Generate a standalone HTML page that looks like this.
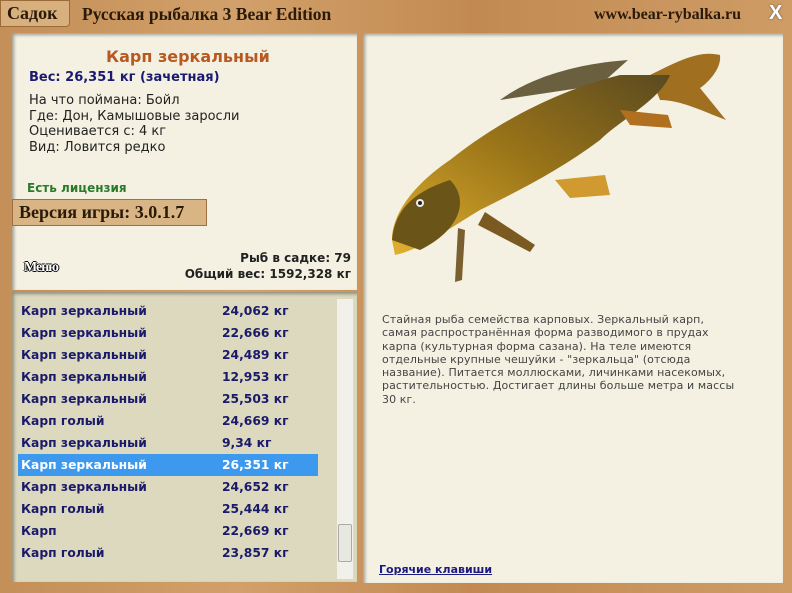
<!DOCTYPE html>
<html><head><meta charset="utf-8"><style>
*{margin:0;padding:0;box-sizing:border-box}
body{width:792px;height:593px;overflow:hidden;position:relative;background:linear-gradient(90deg,#c48f58,#d2a06a 30%,#c28a52 60%,#cf9c66);font-family:Verdana,"DejaVu Sans","Liberation Sans",sans-serif}
.abs{position:absolute}
.serif{font-family:"Liberation Serif","DejaVu Serif",serif;color:#2a1a0a;font-weight:bold}
.panel{position:absolute;background:#f4f1e3;box-shadow:inset 2px 2px 3px rgba(0,0,0,.35)}
.list div{position:absolute;left:0;width:300px;height:22px;font-weight:bold;font-size:12.3px;color:#1a1a6a;line-height:22px}
.list span{position:absolute;left:204px}
.sel{background:#3c99ee;color:#fff!important}
</style></head><body>
<div class="abs serif" style="left:0;top:0;width:70px;height:27px;background:#d8b07e;border:1px solid #9a6a38;border-radius:0 0 4px 0;font-size:18px;padding:2px 6px">Садок</div>
<div class="abs serif" style="left:82px;top:4px;font-size:17.5px;">Русская рыбалка 3 Bear Edition</div>
<div class="abs serif" style="left:594px;top:6px;font-size:16px;">www.bear-rybalka.ru</div>
<div class="abs" style="left:769px;top:2px;font:bold 20px 'Liberation Sans',sans-serif;color:#fff;text-shadow:0 0 2px #555">X</div>

<div class="panel" style="left:12px;top:33px;width:345px;height:257px"></div>
<div class="abs" style="left:106px;top:47px;font-size:16px;font-weight:bold;color:#b85a20">Карп зеркальный</div>
<div class="abs" style="left:29px;top:70px;font-size:13px;font-weight:bold;color:#1a1a70">Вес: 26,351 кг (зачетная)</div>
<div class="abs" style="left:29px;top:93px;font-size:13px;line-height:15.6px;color:#222">На что поймана: Бойл<br>Где: Дон, Камышовые заросли<br>Оценивается с: 4 кг<br>Вид: Ловится редко</div>
<div class="abs" style="left:27px;top:181px;font-size:12px;font-weight:bold;color:#2a7a2a">Есть лицензия</div>
<div class="abs serif" style="left:12px;top:199px;width:195px;height:27px;background:#d9b585;border:1px solid #a07040;font-size:18px;padding:2px 6px">Версия игры: 3.0.1.7</div>
<div class="abs" style="left:24px;top:260px;font:bold 14px 'Liberation Serif',serif;color:#fff;text-shadow:1px 0 #000,-1px 0 #000,0 1px #000,0 -1px #000;letter-spacing:-1px">Меню</div>
<div class="abs" style="right:441px;top:250px;font-size:12px;font-weight:bold;color:#222;text-align:right;line-height:16px">Рыб в садке: 79<br>Общий вес: 1592,328 кг</div>

<div class="panel" style="left:12px;top:292px;width:345px;height:290px;background:#dcd9be"></div>
<div class="abs" style="left:337px;top:299px;width:16px;height:280px;background:#f1f0ea"></div>
<div class="abs" style="left:338px;top:524px;width:14px;height:38px;background:#e8e8e2;border:1px solid #aaa;border-radius:2px"></div>
<div class="list abs" style="left:18px;top:300px">
<div style="top:0;padding-left:3px">Карп зеркальный<span>24,062 кг</span></div>
<div style="top:22px;padding-left:3px">Карп зеркальный<span>22,666 кг</span></div>
<div style="top:44px;padding-left:3px">Карп зеркальный<span>24,489 кг</span></div>
<div style="top:66px;padding-left:3px">Карп зеркальный<span>12,953 кг</span></div>
<div style="top:88px;padding-left:3px">Карп зеркальный<span>25,503 кг</span></div>
<div style="top:110px;padding-left:3px">Карп голый<span>24,669 кг</span></div>
<div style="top:132px;padding-left:3px">Карп зеркальный<span>9,34 кг</span></div>
<div class="sel" style="top:154px;padding-left:3px">Карп зеркальный<span>26,351 кг</span></div>
<div style="top:176px;padding-left:3px">Карп зеркальный<span>24,652 кг</span></div>
<div style="top:198px;padding-left:3px">Карп голый<span>25,444 кг</span></div>
<div style="top:220px;padding-left:3px">Карп<span>22,669 кг</span></div>
<div style="top:242px;padding-left:3px">Карп голый<span>23,857 кг</span></div>
</div>

<div class="panel" style="left:363px;top:33px;width:420px;height:550px"></div>
<svg class="abs" style="left:363px;top:33px" width="420" height="260" viewBox="363 33 420 260">
<defs><linearGradient id="g" x1="0" y1="1" x2="1" y2="0"><stop offset="0" stop-color="#e0b030"/><stop offset=".5" stop-color="#9a7418"/><stop offset="1" stop-color="#5a4a20"/></linearGradient></defs>
<path d="M500 100 C520 85 560 65 628 60 L600 85Z" fill="#6a6040"/>
<path d="M650 75 C680 60 700 50 720 55 C722 70 705 85 700 88 L726 120 C700 110 680 100 660 100Z" fill="#a07020"/>
<path d="M392 240 C392 210 420 180 450 160 C500 120 560 90 620 75 L670 75 C660 100 620 120 600 140 C560 170 520 190 480 210 C450 228 420 250 395 255Z" fill="url(#g)"/>
<path d="M392 240 C395 205 420 190 450 180 C470 200 460 230 420 250 Z" fill="#6a5418"/>
<path d="M555 180 L605 175 L610 195 L570 198Z" fill="#d09a30"/>
<path d="M620 110 L668 115 L672 128 L630 125Z" fill="#b07020"/>
<path d="M485 212 L535 245 L530 252 L478 225Z" fill="#7a5a20"/>
<path d="M465 230 L462 280 L455 282 L458 228Z" fill="#7a6030"/>
<circle cx="420" cy="203" r="4" fill="#eee"/><circle cx="420" cy="203" r="2" fill="#222"/>
</svg>
<div class="abs" style="left:382px;top:313px;white-space:nowrap;font-size:11px;line-height:13.3px;color:#444;letter-spacing:.1px">Стайная рыба семейства карповых. Зеркальный карп,<br>самая распространённая форма разводимого в прудах<br>карпа (культурная форма сазана). На теле имеются<br>отдельные крупные чешуйки - "зеркальца" (отсюда<br>название). Питается моллюсками, личинками насекомых,<br>растительностью. Достигает длины больше метра и массы<br>30 кг.</div>
<div class="abs" style="left:379px;top:563px;font-size:11px;font-weight:bold;color:#1a1a80;text-decoration:underline">Горячие клавиши</div>
</body></html>
